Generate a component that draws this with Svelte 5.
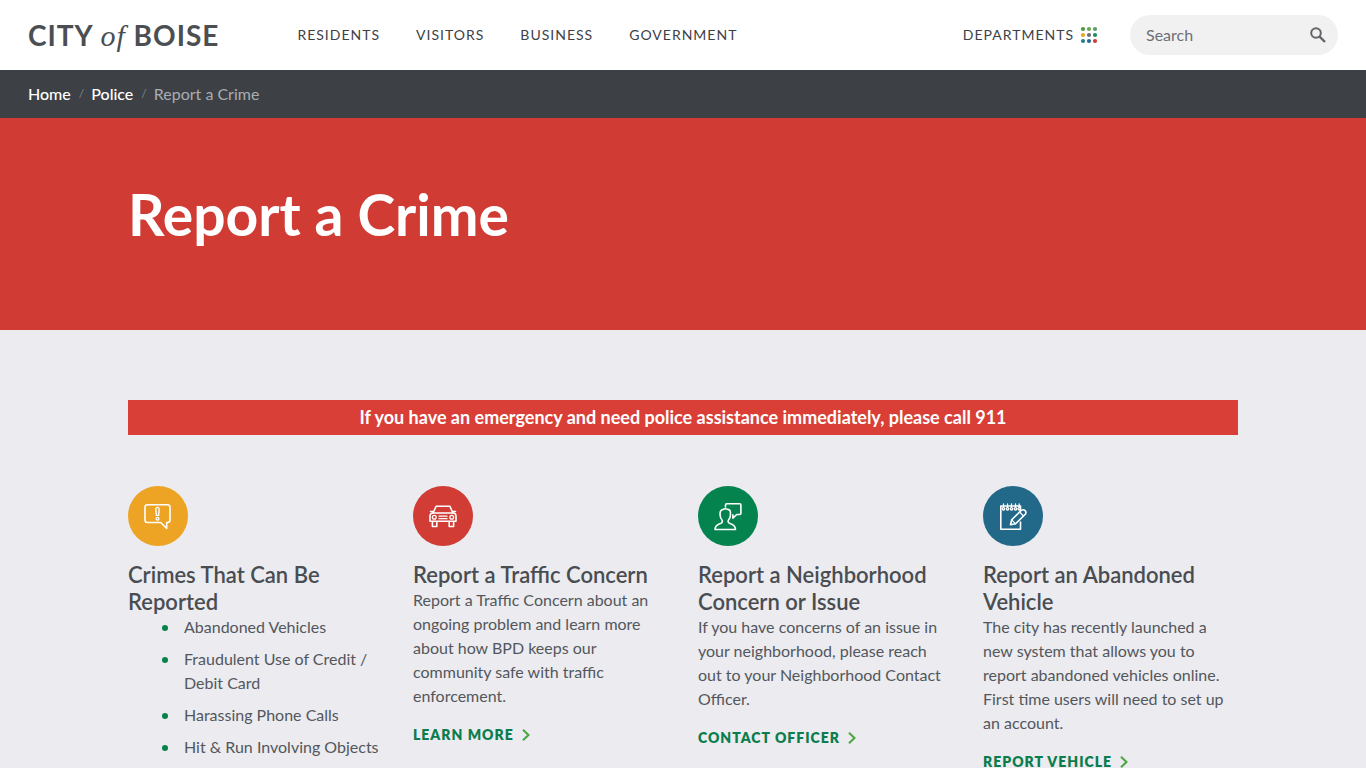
<script lang="ts">
	type Card = {
		title: string;
		icon: 'alert' | 'car' | 'person' | 'notepad';
		text?: string;
		items?: string[];
		link?: string;
	};

	const navLinks = ['Residents', 'Visitors', 'Business', 'Government'];

	const dots = [
		'#4c9a3f', '#6aa84f', '#5a9e6e',
		'#eda323', '#6b6f78', '#1f8f57',
		'#24808a', '#256b8c', '#d13c34'
	];

	const cards: Card[] = [
		{
			title: 'Crimes That Can Be Reported',
			icon: 'alert',
			items: [
				'Abandoned Vehicles',
				'Fraudulent Use of Credit / Debit Card',
				'Harassing Phone Calls',
				'Hit & Run Involving Objects'
			]
		},
		{
			title: 'Report a Traffic Concern',
			icon: 'car',
			text: 'Report a Traffic Concern about an ongoing problem and learn more about how BPD keeps our community safe with traffic enforcement.',
			link: 'Learn More'
		},
		{
			title: 'Report a Neighborhood Concern or Issue',
			icon: 'person',
			text: 'If you have concerns of an issue in your neighborhood, please reach out to your Neighborhood Contact Officer.',
			link: 'Contact Officer'
		},
		{
			title: 'Report an Abandoned Vehicle',
			icon: 'notepad',
			text: 'The city has recently launched a new system that allows you to report abandoned vehicles online. First time users will need to set up an account.',
			link: 'Report Vehicle'
		}
	];

	let query = $state('');
</script>

<header class="header">
	<a class="logo" href="/">CITY <em>of</em> BOISE</a>

	<nav class="nav" aria-label="Main">
		{#each navLinks as label (label)}
			<a href="/{label.toLowerCase()}">{label}</a>
		{/each}
	</nav>

	<button class="departments" type="button">
		Departments
		<svg width="18" height="18" viewBox="0 0 18 18" aria-hidden="true">
			{#each dots as color, i (i)}
				<circle cx={3 + (i % 3) * 6} cy={3 + Math.floor(i / 3) * 6} r="2.1" fill={color} />
			{/each}
		</svg>
	</button>

	<form class="search" role="search">
		<input type="text" placeholder="Search" aria-label="Search" bind:value={query} />
		<button type="submit" aria-label="Submit search">
			<svg width="16" height="16" viewBox="0 0 16 16" fill="none" stroke="currentColor">
				<circle cx="6" cy="6" r="4.8" stroke-width="2" />
				<path d="M9.6 9.6L15 15" stroke-width="2.4" />
			</svg>
		</button>
	</form>
</header>

<nav class="breadcrumb" aria-label="Breadcrumb">
	<ol>
		<li><a href="/">Home</a></li>
		<li><a href="/police">Police</a></li>
		<li aria-current="page">Report a Crime</li>
	</ol>
</nav>

<section class="hero">
	<div class="container">
		<h1>Report a Crime</h1>
	</div>
</section>

<main class="container content">
	<p class="alert">If you have an emergency and need police assistance immediately, please call 911</p>

	<div class="cards">
		{#each cards as card (card.title)}
			<article class="card">
				<div class="icon icon-{card.icon}">
					<svg viewBox="0 0 60 60" fill="none" stroke="#fff" stroke-width="1.6" stroke-linejoin="round" stroke-linecap="round" aria-hidden="true">
						{#if card.icon === 'alert'}
							<path d="M19.500 18.800h20q2.500 0 2.500 2.500V34q0 2.500-2.500 2.500h-.8V42.500l-6-6H19.500Q17 36.500 17 34V21.300q0-2.500 2.500-2.500z" />
							<path d="M27.800 23.200q0-1.800 1.700-1.800t1.700 1.800l-.6 6.200h-2.200z" stroke-width="1.400" />
							<circle cx="29.500" cy="32.800" r="1.400" stroke-width="1.300" />
						{:else if card.icon === 'car'}
							<path d="M20 27l3.200-6.800h13.600L40 27" />
							<path d="M20 27h20q3 0 3 3v5.300H17V30q0-3 3-3z" />
							<circle cx="21.300" cy="31.300" r="1.900" stroke-width="1.300" />
							<circle cx="38.700" cy="31.300" r="1.900" stroke-width="1.300" />
							<path d="M26 30.200h8M26 32.700h8" stroke-width="1.300" />
							<path d="M19.400 35.500v5h4.400v-5M36.200 35.500v5h4.400v-5M19.800 25.500h-2.300M40.200 25.500h2.300" />
						{:else if card.icon === 'person'}
							<path d="M17 43.500h20.500c0-4-2.200-5.200-6-6.300-1.500-.5-1.700-2.200-.8-3.400 1.300-1.500 1.700-3 1.700-4.800v-3q-.3-2.500-2.700-2.600-2.600-1.300-4.700.1-2.900.5-2.900 3.500v2.500q.4 2.800 1.700 4.300c.9 1.200.7 2.900-.8 3.400-3.800 1.100-6 2.300-6 6.300z" />
							<path d="M27.500 21v-2q0-1.200 1.200-1.200h13q1.200 0 1.200 1.200v8.300q0 1.200-1.200 1.200h-3l-3.800 3.700v-3.500" />
						{:else}
							<path d="M37.500 24V20H17.800v23.200h19.700V36" />
							<g stroke-width="1.300">
								<circle cx="20.500" cy="22.800" r="1.200" />
								<circle cx="24.500" cy="22.800" r="1.200" />
								<circle cx="28.500" cy="22.800" r="1.200" />
								<circle cx="32.500" cy="22.800" r="1.200" />
								<circle cx="36.200" cy="22.800" r="1.200" />
								<path d="M20.500 18v3M24.500 18v3M28.500 18v3M32.500 18v3M36.200 18v3" />
							</g>
							<path d="M27.500 38.800l1.200-5 9.700-9.500q2-1.300 3.700.3 1.600 1.600.2 3.600l-9.700 9.600z" />
							<path d="M36.500 26l4 4M28.700 33.800l3.900 4" stroke-width="1.200" />
						{/if}
					</svg>
				</div>
				<h3>{card.title}</h3>
				{#if card.items}
					<ul>
						{#each card.items as item (item)}
							<li>{item}</li>
						{/each}
					</ul>
				{/if}
				{#if card.text}
					<p>{card.text}</p>
				{/if}
				{#if card.link}
					<a class="more" href="/police">
						{card.link}
						<svg width="8" height="12" viewBox="0 0 8 12" fill="none" stroke="#4aa53c" stroke-width="2" aria-hidden="true">
							<path d="M1 .8L6.500 6 1 11.200" />
						</svg>
					</a>
				{/if}
			</article>
		{/each}
	</div>
</main>

<style>
	:global(body) {
		margin: 0;
		background: #ebebf0;
		color: #53575c;
		font-family: Lato, 'Liberation Sans', sans-serif;
		font-size: 16px;
		line-height: 24px;
	}

	a {
		text-decoration: none;
	}

	button {
		border: 0;
		padding: 0;
		background: none;
		font: inherit;
		color: inherit;
		cursor: pointer;
	}

	.header {
		display: flex;
		align-items: center;
		height: 70px;
		padding: 0 28px;
		background: #fff;
	}

	.logo {
		font-size: 28px;
		font-weight: 700;
		line-height: 36px;
		letter-spacing: 1px;
		color: #4b4f54;
		white-space: nowrap;
	}

	.logo em {
		font-family: 'Liberation Serif', serif;
		font-size: 30px;
		font-weight: 400;
		line-height: 24px;
	}

	.nav {
		display: flex;
		gap: 36px;
		margin: 0 auto 0 78px;
	}

	.nav a,
	.departments {
		font-size: 14px;
		letter-spacing: 1px;
		text-transform: uppercase;
		color: #3d4146;
	}

	.departments {
		display: flex;
		align-items: center;
		gap: 6px;
		margin-right: 32px;
	}

	.search {
		display: flex;
		align-items: center;
		box-sizing: border-box;
		width: 208px;
		height: 40px;
		padding: 0 12px 0 16px;
		border-radius: 20px;
		background: #f1f1f1;
		color: #636569;
	}

	.search input {
		flex: 1;
		min-width: 0;
		border: 0;
		padding: 0;
		outline: 0;
		background: none;
		font: inherit;
		color: inherit;
	}

	.search input::placeholder {
		color: #6d7075;
		opacity: 1;
	}

	.search button {
		display: flex;
	}

	.breadcrumb {
		padding: 12px 28px;
		background: #3d4045;
	}

	.breadcrumb ol {
		display: flex;
		margin: 0;
		padding: 0;
		list-style: none;
		color: #a9adb3;
	}

	.breadcrumb li {
		display: flex;
	}

	.breadcrumb a {
		font-weight: 500;
		color: #fff;
	}

	.breadcrumb li + li::before {
		content: '/';
		padding: 0 7px 0 8px;
		font-size: 12px;
		color: #80848a;
	}

	.container {
		max-width: 1110px;
		margin: 0 auto;
	}

	.hero {
		padding: 60px 0 80px;
		background: #d03c34;
	}

	h1 {
		margin: 0;
		font-size: 57px;
		font-weight: 700;
		line-height: 72px;
		color: #fff;
	}

	.content {
		padding: 70px 0 20px;
	}

	.alert {
		margin: 0 0 51px;
		padding: 5px 0 6px;
		background: #d93f37;
		font-size: 18px;
		font-weight: 700;
		text-align: center;
		color: #fff;
	}

	.cards {
		display: grid;
		grid-template-columns: repeat(4, 1fr);
		gap: 30px;
	}

	.icon {
		width: 60px;
		height: 60px;
		margin-bottom: 15px;
		border-radius: 50%;
	}

	.icon svg {
		display: block;
	}

	.icon-alert {
		background: #eda323;
	}

	.icon-car {
		background: #d13c34;
	}

	.icon-person {
		background: #05834f;
	}

	.icon-notepad {
		background: #226888;
	}

	h3 {
		margin: 0;
		font-size: 22px;
		font-weight: 600;
		line-height: 27px;
		color: #494d52;
	}

	.card p {
		margin: 0 0 16px;
	}

	.card ul {
		display: flex;
		flex-direction: column;
		gap: 8px;
		margin: 0;
		padding-left: 34px;
		list-style: none;
	}

	.card li {
		display: flex;
		gap: 16px;
	}

	.card li::before {
		content: '';
		flex-shrink: 0;
		width: 6px;
		height: 6px;
		margin-top: 10px;
		border-radius: 50%;
		background: #05834f;
	}

	.more {
		display: flex;
		align-items: center;
		gap: 8px;
		width: fit-content;
		font-size: 14px;
		font-weight: 800;
		line-height: 22px;
		letter-spacing: 1px;
		text-transform: uppercase;
		color: #0b7d4c;
	}

	@media (max-width: 900px) {
		.container {
			padding-left: 28px;
			padding-right: 28px;
		}

		.cards {
			grid-template-columns: repeat(2, 1fr);
		}
	}
</style>
